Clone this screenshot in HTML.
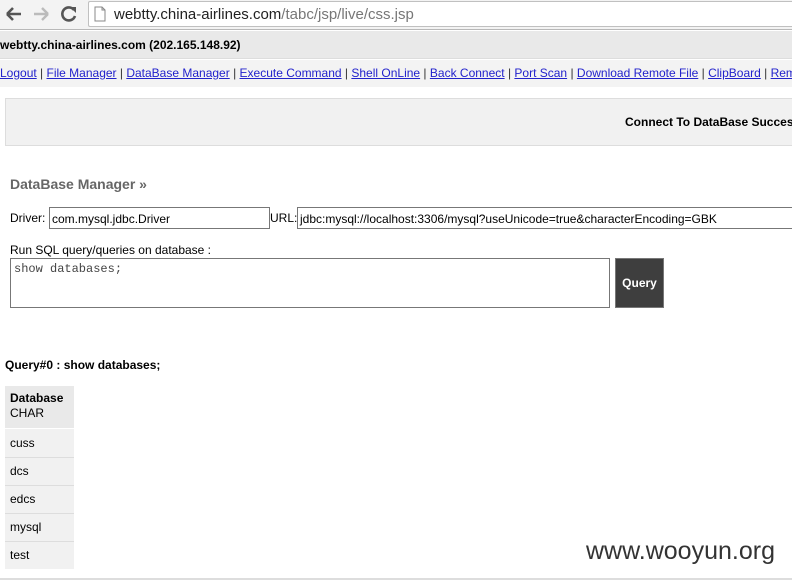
<!DOCTYPE html>
<html><head><style>
*{margin:0;padding:0;box-sizing:border-box}
html,body{width:792px;height:581px;overflow:hidden}
body{background:#fff;font-family:"Liberation Sans",sans-serif;font-size:12px;color:#000;position:relative}
.abs{position:absolute;white-space:nowrap}
a{color:#2222cc;text-decoration:underline}
</style></head><body>
<div class="abs" style="left:0;top:0;width:792px;height:30px;background:#f3f3f3;border-bottom:1px solid #b8b8b8"></div>
<svg class="abs" style="left:4px;top:5px" width="76" height="18" viewBox="0 0 76 18">
<path d="M3 9 H17 M3 9 L9 3 M3 9 L9 15" stroke="#555" stroke-width="2.6" fill="none"/>
<path d="M44 9 H30 M44 9 L38 3 M44 9 L38 15" stroke="#bbb" stroke-width="2.4" fill="none"/>
<path d="M70 5 A6.5 6.5 0 1 0 71 11" stroke="#555" stroke-width="2.6" fill="none"/>
<path d="M66 2 L72 2 L72 8 Z" fill="#555"/>
</svg>
<div class="abs" style="left:88px;top:1px;width:704px;height:26px;background:#fff;border:1px solid #c0c0c0;border-right:none;border-radius:2px 0 0 2px"></div>
<svg class="abs" style="left:94px;top:6px" width="12" height="16"><path d="M1 1 H8 L11 4 V15 H1 Z M8 1 V4 H11" fill="#fff" stroke="#888"/></svg>
<div class="abs" style="left:114px;top:6px;font-size:15px;color:#222">webtty.china-airlines.com<span style="color:#777">/tabc/jsp/live/css.jsp</span></div>
<div class="abs" style="left:0;top:31px;width:792px;height:28px;background:#e9e9e9;border-bottom:1px solid #ddd"></div>
<div class="abs" style="left:0;top:38px;font-weight:bold;font-size:12px">webtty.china-airlines.com (202.165.148.92)</div>
<div class="abs" style="left:0;top:60px;width:792px;height:27px;background:#f3f3f3;overflow:hidden">
<div class="abs" style="left:0;top:6px;font-size:12px;color:#333"><a>Logout</a> | <a>File Manager</a> | <a>DataBase Manager</a> | <a>Execute Command</a> | <a>Shell OnLine</a> | <a>Back Connect</a> | <a>Port Scan</a> | <a>Download Remote File</a> | <a>ClipBoard</a> | <a>Remote Shell</a></div></div>
<div class="abs" style="left:5px;top:98px;width:787px;height:48px;background:#f1f1f1;border:1px solid #ddd;border-right:none;overflow:hidden">
<div class="abs" style="left:619px;top:16px;font-weight:bold">Connect To DataBase Success</div></div>
<div class="abs" style="left:10px;top:176px;font-weight:bold;font-size:14px;color:#666">DataBase Manager »</div>
<div class="abs" style="left:10px;top:211px">Driver:</div>
<div class="abs" style="left:49px;top:207px;width:221px;height:22px;border:1px solid #777;padding:4px 2px;font-size:12px">com.mysql.jdbc.Driver</div>
<div class="abs" style="left:270px;top:211px">URL:</div>
<div class="abs" style="left:297px;top:207px;width:495px;height:22px;border:1px solid #777;border-right:none;padding:4px 2px;font-size:12px;overflow:hidden">jdbc:mysql://localhost:3306/mysql?useUnicode=true&amp;characterEncoding=GBK</div>
<div class="abs" style="left:10px;top:243px">Run SQL query/queries on database :</div>
<div class="abs" style="left:10px;top:258px;width:600px;height:50px;border:1px solid #777;padding:3px 3px;font-family:'Liberation Mono',monospace;font-size:12px;color:#444">show databases;</div>
<div class="abs" style="left:615px;top:258px;width:49px;height:50px;background:#3e3e3e;border:1px solid #777;color:#fff;font-weight:bold;font-size:12px;text-align:center;line-height:48px">Query</div>
<div class="abs" style="left:5px;top:358px;font-weight:bold">Query#0 : show databases;</div>
<div class="abs" style="left:5px;top:386px;width:69px;height:43px;background:#e9e9e9;border-bottom:1px solid #fff;padding:5px 5px;font-size:12px;line-height:15px"><b>Database</b><br>CHAR</div>
<div class="abs" style="left:5px;top:429px;width:69px;height:140px;background:#f1f1f1"></div>
<div class="abs" style="left:10px;top:436px">cuss</div>
<div class="abs" style="left:5px;top:457px;width:69px;border-top:1px solid #ddd"></div>
<div class="abs" style="left:10px;top:464px">dcs</div>
<div class="abs" style="left:5px;top:485px;width:69px;border-top:1px solid #ddd"></div>
<div class="abs" style="left:10px;top:492px">edcs</div>
<div class="abs" style="left:5px;top:513px;width:69px;border-top:1px solid #ddd"></div>
<div class="abs" style="left:10px;top:520px">mysql</div>
<div class="abs" style="left:5px;top:541px;width:69px;border-top:1px solid #ddd"></div>
<div class="abs" style="left:10px;top:548px">test</div>
<div class="abs" style="left:0;top:578px;width:792px;border-top:2px solid #ddd"></div>
<div class="abs" style="left:586px;top:537px;font-size:25px;color:#333">www.wooyun.org</div>
</body></html>
